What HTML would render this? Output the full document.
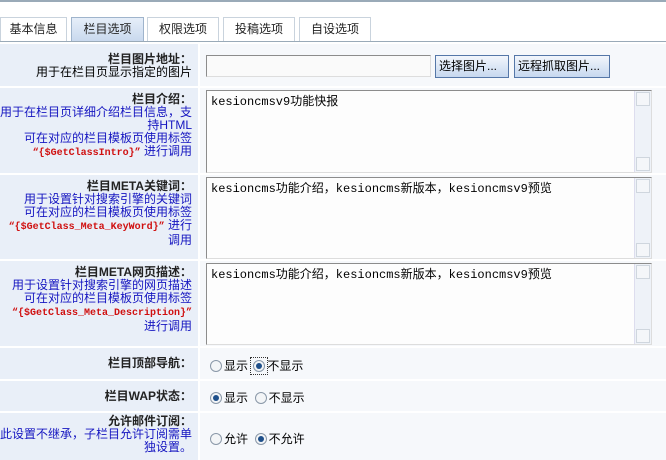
<!DOCTYPE html>
<html><head><meta charset="utf-8"><style>
*{margin:0;padding:0;box-sizing:border-box}
body{width:666px;height:460px;overflow:hidden;background:#fff;font-family:"Liberation Sans","Noto Sans CJK SC","WenQuanYi Zen Hei",sans-serif;font-size:12px;position:relative;color:#000}
.a{position:absolute}
.topline{left:0;top:0;width:666px;height:2px;background:#9aaab8}
.tab{top:17px;height:24px;border:1px solid #c9d3dd;border-bottom:none;background:#fff;text-align:center;line-height:22px;font-size:12px;color:#222}
.tab.on{background:linear-gradient(#e6eef9,#c9d9ee);border-color:#9fb4cc}
.tabline{left:0;top:41px;width:666px;height:1px;background:#9aaab8}
.l{left:0;width:198px;background:#e9eff8;text-align:right;padding-right:6px;line-height:13px;font-size:12px}
.r{left:200px;width:466px;background:#f6f8fb}
.l b{color:#222;font-weight:bold}
.bl{color:#1515c0}
.red{color:#d01010;font-family:"Liberation Mono",monospace;font-size:10px;font-weight:bold}
.ta{left:206px;width:446px;background:#fdfdfd;border:1px solid #8c8c8c;border-right-color:#ddd;border-bottom-color:#ddd;font-family:"Liberation Mono","Noto Sans CJK SC",monospace;font-size:12px;padding:4px 4px;line-height:14px}
.sb{position:absolute;right:0;top:0;bottom:0;width:17px;background:#eef2f8;border-left:1px solid #dde}
.sb i{position:absolute;left:1px;width:14px;height:14px;background:#f4f6f9;border:1px solid #cfd6de}
.btn{top:55px;height:23px;border:1px solid #5577a8;background:linear-gradient(#f2f6fc,#c7d8ef);line-height:21px;padding:0 3px;font-size:12px}
.rad{display:inline-block;width:12px;height:12px;border-radius:50%;border:1px solid #8a98a8;background:#f3f5f7;vertical-align:-2px;margin-right:2px;position:relative}
.rad.on::after{content:"";position:absolute;left:2px;top:2px;width:6px;height:6px;border-radius:50%;background:#1e4f8a}
.opt{left:210px;font-size:12px}
</style></head><body>
<div class="a topline"></div>
<div class="a tab" style="left:0;width:67px">基本信息</div>
<div class="a tab on" style="left:71px;width:73px">栏目选项</div>
<div class="a tab" style="left:147px;width:72px">权限选项</div>
<div class="a tab" style="left:223px;width:72px">投稿选项</div>
<div class="a tab" style="left:299px;width:72px">自设选项</div>
<div class="a tabline"></div>

<div class="a l" style="top:44px;height:42px;padding-top:9px"><b>栏目图片地址：</b><br>用于在栏目页显示指定的图片</div>
<div class="a r" style="top:44px;height:42px"></div>
<div class="a" style="left:206px;top:55px;width:225px;height:22px;background:#fafafa;border:1px solid #8c8c8c;border-right-color:#ddd;border-bottom-color:#ddd"></div>
<div class="a btn" style="left:435px;width:74px">选择图片...</div>
<div class="a btn" style="left:514px;width:96px">远程抓取图片...</div>

<div class="a l" style="top:88px;height:85px;padding-top:5px"><b>栏目介绍：</b><br><span class="bl">用于在栏目页详细介绍栏目信息，支持HTML<br>可在对应的栏目模板页使用标签<br></span><span class="red">“{$GetClassIntro}”</span><span class="bl"> 进行调用</span></div>
<div class="a r" style="top:88px;height:85px"></div>
<div class="a ta" style="top:90px;height:83px">kesioncmsv9功能快报<div class="sb"><i style="top:1px"></i><i style="bottom:1px"></i></div></div>

<div class="a l" style="top:175px;height:84px;padding-top:5px"><b>栏目META关键词：</b><br><span class="bl">用于设置针对搜索引擎的关键词<br>可在对应的栏目模板页使用标签<br></span><span class="red">“{$GetClass_Meta_KeyWord}”</span><span class="bl"> 进行调用</span></div>
<div class="a r" style="top:175px;height:84px"></div>
<div class="a ta" style="top:177px;height:82px">kesioncms功能介绍，kesioncms新版本，kesioncmsv9预览<div class="sb"><i style="top:1px"></i><i style="bottom:1px"></i></div></div>

<div class="a l" style="top:261px;height:85px;padding-top:5px"><b>栏目META网页描述：</b><br><span class="bl">用于设置针对搜索引擎的网页描述<br>可在对应的栏目模板页使用标签<br></span><span class="red">“{$GetClass_Meta_Description}”</span><span class="bl"> 进行调用</span></div>
<div class="a r" style="top:261px;height:85px"></div>
<div class="a ta" style="top:263px;height:82px">kesioncms功能介绍，kesioncms新版本，kesioncmsv9预览<div class="sb"><i style="top:1px"></i><i style="bottom:1px"></i></div></div>

<div class="a l" style="top:348px;height:31px;line-height:31px"><b>栏目顶部导航：</b></div>
<div class="a r" style="top:348px;height:31px"></div>
<div class="a opt" style="top:357px"><span class="rad"></span>显示 <span style="outline:1px dotted #333;padding:1px 0 1px 2px"><span class="rad on"></span></span>不显示</div>

<div class="a l" style="top:381px;height:30px;line-height:30px"><b>栏目WAP状态：</b></div>
<div class="a r" style="top:381px;height:30px"></div>
<div class="a opt" style="top:389px"><span class="rad on"></span>显示 &nbsp;<span class="rad"></span>不显示</div>

<div class="a l" style="top:413px;height:47px;padding-top:2px"><b>允许邮件订阅：</b><br><span class="bl">此设置不继承，子栏目允许订阅需单独设置。</span></div>
<div class="a r" style="top:413px;height:47px"></div>
<div class="a opt" style="top:430px"><span class="rad"></span>允许 &nbsp;<span class="rad on"></span>不允许</div>
</body></html>
